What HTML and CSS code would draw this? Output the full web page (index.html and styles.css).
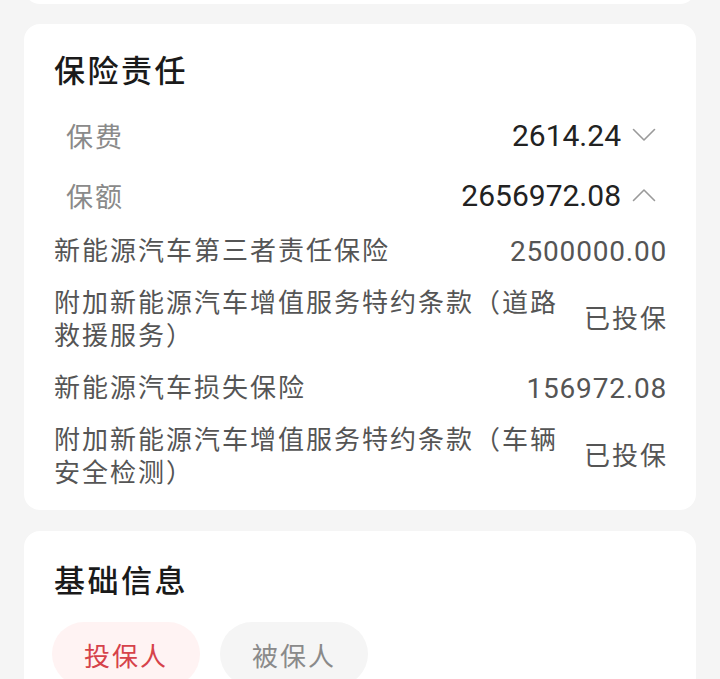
FILE: index.html
```html
<!DOCTYPE html>
<html lang="zh-CN">
<head>
<meta charset="utf-8">
<title>保险详情</title>
<link rel="stylesheet" href="styles.css">
</head>
<body>
<div class="page">
  <div class="card card-top"></div>

  <div class="card card-duty">
    <h2 class="card-title">保险责任</h2>
    <div class="sum-row">
      <span class="sum-label">保费</span>
      <span class="sum-right">
        <span class="sum-value">2614.24</span>
        <svg class="chev" viewBox="0 0 24 14" width="24" height="14"><path d="M1.5 1.5 L12 12 L22.5 1.5" fill="none" stroke="#9a9a9a" stroke-width="1.6" stroke-linecap="round" stroke-linejoin="round"/></svg>
      </span>
    </div>
    <div class="sum-row">
      <span class="sum-label">保额</span>
      <span class="sum-right">
        <span class="sum-value">2656972.08</span>
        <svg class="chev" viewBox="0 0 24 14" width="24" height="14"><path d="M1.5 12.5 L12 2 L22.5 12.5" fill="none" stroke="#9a9a9a" stroke-width="1.6" stroke-linecap="round" stroke-linejoin="round"/></svg>
      </span>
    </div>
    <div class="items">
      <div class="item">
        <span class="item-name">新能源汽车第三者责任保险</span>
        <span class="item-value num">2500000.00</span>
      </div>
      <div class="item">
        <span class="item-name">附加新能源汽车增值服务特约条款（道路救援服务）</span>
        <span class="item-value">已投保</span>
      </div>
      <div class="item">
        <span class="item-name">新能源汽车损失保险</span>
        <span class="item-value num">156972.08</span>
      </div>
      <div class="item">
        <span class="item-name">附加新能源汽车增值服务特约条款（车辆安全检测）</span>
        <span class="item-value">已投保</span>
      </div>
    </div>
  </div>

  <div class="card card-basic">
    <h2 class="card-title">基础信息</h2>
    <div class="tabs">
      <span class="tab tab-active">投保人</span>
      <span class="tab">被保人</span>
    </div>
  </div>
</div>
</body>
</html>
```

FILE: styles.css
```css
html, body {
  margin: 0;
  padding: 0;
  background: #f5f5f5;
}
body {
  font-family: "Roboto", "Noto Sans CJK SC", sans-serif;
  color: #222;
  overflow: hidden;
  height: 679px;
}
.page {
  display: flex;
  flex-direction: column;
  gap: 20px;
  padding: 0 24px;
}
.card {
  background: #fff;
  border-radius: 16px;
}
.card-top {
  height: 44px;
  margin-top: -40px;
}
.card-duty {
  padding: 24px 30px 11px;
}
.card-basic {
  margin-top: 1px;
  padding: 27px 30px 0;
  height: 160px;
}
.card-title {
  margin: 0;
  font-size: 31px;
  font-weight: 500;
  line-height: 48px;
  letter-spacing: 2.5px;
  color: #1a1a1a;
}
.card-duty .card-title {
  margin-bottom: 9px;
}
.sum-row {
  height: 60px;
  display: flex;
  align-items: center;
  justify-content: space-between;
  padding: 0 10px 0 12px;
}
.sum-label {
  font-size: 27px;
  letter-spacing: 2px;
  color: #8a8a8a;
}
.sum-right {
  display: flex;
  align-items: center;
  gap: 11px;
}
.sum-value {
  font-size: 30px;
  letter-spacing: 0;
  color: #222;
}
.chev {
  display: block;
}
.items {
  display: flex;
  flex-direction: column;
}
.item {
  display: flex;
  align-items: center;
  gap: 20px;
  padding: 9.5px 0;
  font-size: 26px;
  line-height: 33px;
  letter-spacing: 2px;
  color: #555;
}
.item-name {
  flex: 1;
  min-width: 0;
}
.item-value {
  flex-shrink: 0;
  margin-right: -2px;
}
.item-value.num {
  font-size: 28px;
  letter-spacing: 0.8px;
  margin-right: -1px;
}
.tabs {
  display: flex;
  gap: 20px;
  margin-top: 16px;
  margin-left: -2px;
}
.tab {
  width: 148px;
  height: 64px;
  border-radius: 32px;
  background: #f5f5f5;
  color: #8a8a8a;
  font-size: 26px;
  letter-spacing: 2px;
  display: flex;
  align-items: center;
  justify-content: center;
}
.tab-active {
  background: #fff3f3;
  color: #d6424a;
}
```
